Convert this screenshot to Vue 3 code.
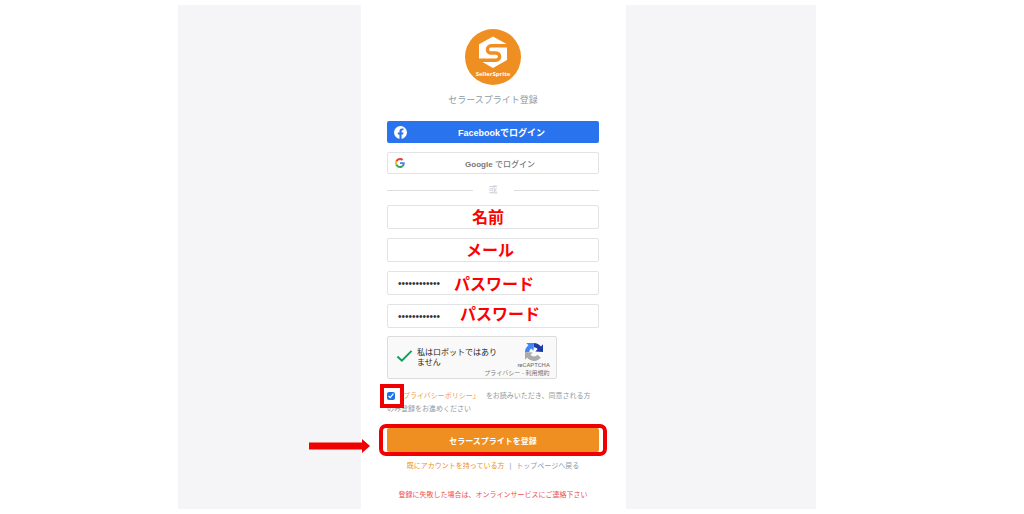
<script setup>
import { ref } from 'vue'

const fields = ref([
  { id: 'name', label: '名前', type: 'text', value: '', place: 'note-name' },
  { id: 'mail', label: 'メール', type: 'email', value: '', place: 'note-mail' },
  { id: 'password', label: 'パスワード', type: 'password', value: 'password1234', place: 'note-password' },
  { id: 'confirm', label: 'パスワード', type: 'password', value: 'password1234', place: 'note-confirm' }
])
const agreed = ref(true)
</script>

<template>
  <div class="page">
    <main class="panel">
      <form class="card" @submit.prevent>
        <svg class="logo" viewBox="0 0 56 56" role="img" aria-label="SellerSprite">
          <circle cx="28" cy="28" r="28" fill="#f08f21" />
          <path d="M28 7.500L42 15.300V31L28 39L14 31V15.300Z" fill="#fff" />
          <path d="M43 16.800H26a3.600 3.600 0 0 0 0 7.200H31a3.600 3.600 0 0 1 0 7.200H13" fill="none" stroke="#f08f21" stroke-width="3.400" />
          <text x="28" y="47" text-anchor="middle" class="logo-name">SellerSprite</text>
        </svg>
        <h1 class="title">セラースプライト登録</h1>

        <button type="button" class="social facebook">
          <svg class="facebook-icon" viewBox="0 0 24 24" aria-hidden="true">
            <circle cx="12" cy="12" r="12" fill="#fff" />
            <path d="M10.100 24v-8.500H7V12h3.100V9.300c0-3.100 1.850-4.800 4.650-4.800 1.350 0 2.750.25 2.750.25v3h-1.550c-1.500 0-2 .95-2 1.900V12h3.400l-.55 3.500h-2.850V24z" fill="#2974ee" />
          </svg>
          <span>Facebookでログイン</span>
        </button>
        <button type="button" class="social google">
          <svg class="google-icon" viewBox="0 0 48 48" aria-hidden="true">
            <path fill="#EA4335" d="M24 9.500c3.540 0 6.710 1.220 9.210 3.600l6.850-6.850C35.900 2.380 30.470 0 24 0 14.620 0 6.510 5.380 2.560 13.220l7.980 6.190C12.430 13.720 17.740 9.500 24 9.500z" />
            <path fill="#4285F4" d="M46.980 24.550c0-1.570-.15-3.090-.38-4.550H24v9.020h12.940c-.58 2.960-2.260 5.480-4.780 7.180l7.730 6c4.510-4.180 7.090-10.360 7.090-17.650z" />
            <path fill="#FBBC05" d="M10.530 28.590A14.500 14.500 0 0 1 9.770 24c0-1.600.27-3.140.76-4.590l-7.980-6.190A23.900 23.900 0 0 0 0 24c0 3.880.92 7.540 2.560 10.780z" />
            <path fill="#34A853" d="M24 48c6.480 0 11.930-2.130 15.890-5.810l-7.730-6c-2.150 1.450-4.920 2.300-8.160 2.300-6.260 0-11.570-4.220-13.470-9.910l-7.980 6.190C6.510 42.620 14.620 48 24 48z" />
          </svg>
          <span><b>Google</b> でログイン</span>
        </button>

        <div class="divider"><span>或</span></div>

        <div class="fields">
          <div v-for="field in fields" :key="field.id" class="field">
            <input :id="field.id" v-model="field.value" :type="field.type" autocomplete="off" />
            <label :for="field.id" class="note" :class="field.place">{{ field.label }}</label>
          </div>
        </div>

        <div class="captcha">
          <svg class="tick" viewBox="0 0 18 14" aria-hidden="true">
            <path d="M1.500 7.500L6.200 12L16.500 1.500" fill="none" stroke="#0f9d58" stroke-width="2" />
          </svg>
          <p class="captcha-text">私はロボットではありません</p>
          <div class="brand">
            <svg class="brand-icon" viewBox="0 0 64 64" aria-hidden="true">
              <path fill="#1c3aa9" d="M64 31.950V4.600l-7.600 7.600A32 32 0 0 0 31.900 0v15.400c5 0 9.800 2.500 12.700 6.700l-7.800 7.800z" />
              <path fill="#4285f4" d="M31.900 0H4.600l7.600 7.600A32 32 0 0 0 0 32h15.400c0-5 2.500-9.800 6.700-12.700l8.200 8.200z" />
              <path fill="#ababab" d="M0 32v27.300l7.500-7.500A32 32 0 0 0 56.500 52.500L44.600 41.800A15.800 15.800 0 0 1 19.300 41.900l8.400-8.400z" />
            </svg>
            <span class="brand-name">reCAPTCHA</span>
          </div>
          <p class="terms"><a href="#">プライバシー</a> - <a href="#">利用規約</a></p>
        </div>

        <div class="policy">
          <span class="check"><input id="agree" v-model="agreed" type="checkbox" /></span>
          <label for="agree"><a href="#" class="policy-link">「プライバシーポリシー」</a>をお読みいただき、同意される方のみ登録をお進めください</label>
        </div>

        <div class="submit">
          <button type="submit" class="register">セラースプライトを登録</button>
          <svg class="arrow" viewBox="0 0 61 14" aria-hidden="true">
            <path d="M0 3.500H53V0L61 7L53 14V10.500H0Z" fill="#f00000" />
          </svg>
        </div>

        <p class="links"><a href="#" class="orange">既にアカウントを持っている方</a><span class="bar">|</span><a href="#">トップページへ戻る</a></p>
        <p class="help">登録に失敗した場合は、オンラインサービスにご連絡下さい</p>
      </form>
    </main>
  </div>
</template>

<style>
body {
  margin: 0;
  background: #fff;
}
</style>

<style scoped>
.page {
  display: grid;
  grid-template-columns: 178fr 638fr 208fr;
  padding: 5px 0;
  font-family: "Liberation Sans", "Noto Sans CJK JP", sans-serif;
  color: #8f9ba5;
}
.page *,
.page *::before,
.page *::after {
  box-sizing: border-box;
}
.panel {
  grid-column: 2;
  display: grid;
  grid-template-columns: 183fr 265px 190fr;
  background: #f5f5f7;
}
.card {
  grid-column: 2;
  display: flex;
  flex-direction: column;
  padding: 24px 27px 8px 26px;
  background: #fff;
}
button,
input {
  font-family: inherit;
  margin: 0;
}
p {
  margin: 0;
}
a {
  color: inherit;
  text-decoration: none;
}
.logo {
  align-self: center;
  width: 56px;
  height: 56px;
}
.logo-name {
  font: bold 6px "Open Sans", sans-serif;
  fill: #fff;
}
.title {
  margin: 8px 0 14px;
  font-size: 9px;
  font-weight: 400;
  line-height: 14px;
  text-align: center;
}
.social {
  display: flex;
  align-items: center;
  gap: 3px;
  height: 22px;
  padding: 0 6px 0 7px;
  border-radius: 2px;
}
.social span {
  flex: 1;
}
.facebook {
  border: 0;
  background: #2974ee;
  color: #fff;
  font-size: 9px;
  font-weight: 700;
}
.facebook-icon {
  width: 13px;
  height: 13px;
}
.google {
  margin-top: 9px;
  border: 1px solid #e2e3e5;
  background: #fff;
  color: #777;
  font-size: 8px;
  font-weight: 500;
}
.google-icon {
  width: 10px;
  height: 10px;
}
.divider {
  display: flex;
  align-items: center;
  gap: 16px;
  margin: 9px 0 8px;
  font-size: 9px;
  line-height: 14px;
  color: #ccc;
}
.divider::before,
.divider::after {
  content: "";
  flex: 1;
  height: 1px;
  background: #dcdddf;
}
.fields {
  display: grid;
  gap: 9px;
}
.field {
  position: relative;
  display: flex;
}
.field input {
  width: 100%;
  height: 24px;
  padding: 0 10px;
  border: 1px solid #e2e3e5;
  border-radius: 2px;
  background: #fff;
  color: #333;
  font-size: 10px;
}
.note {
  position: absolute;
  top: 1px;
  font-size: 16px;
  font-weight: 700;
  line-height: 24px;
  color: #f00;
}
.note-name {
  left: 85px;
}
.note-mail {
  left: 79px;
}
.note-password {
  top: 2px;
  left: 67px;
}
.note-confirm {
  top: -1px;
  left: 73px;
}
.captcha {
  display: grid;
  grid-template-columns: 17px 1fr 32px;
  grid-template-rows: 32px 8px;
  column-gap: 4px;
  align-items: center;
  width: 80%;
  height: 43px;
  margin-top: 8px;
  padding: 0 6px 0 8px;
  border: 1px solid #dcdcdc;
  border-radius: 2px;
  background: #f9f9f9;
}
.tick {
  width: 17px;
  height: 14px;
  margin-top: 6px;
}
.captcha-text {
  width: 80px;
  padding-top: 10px;
  font-size: 8px;
  line-height: 10px;
  color: #222;
}
.brand {
  display: flex;
  flex-direction: column;
  align-items: center;
  padding-top: 6px;
}
.brand-icon {
  width: 18px;
  height: 18px;
}
.brand-name {
  font: 6px/8px Roboto, sans-serif;
  color: #666;
}
.terms {
  grid-column: 1 / -1;
  font-size: 6px;
  line-height: 8px;
  text-align: right;
  color: #777;
}
.policy {
  position: relative;
  margin-top: 10px;
  padding-right: 4px;
  font-size: 7px;
  line-height: 13px;
}
.check {
  display: inline-flex;
  width: 9px;
  vertical-align: middle;
}
.check input {
  width: 8px;
  height: 8px;
  accent-color: #1a73e8;
}
.check::after {
  content: "";
  position: absolute;
  top: -5px;
  left: -7px;
  width: 24px;
  height: 24px;
  border: 4px solid #f00000;
  pointer-events: none;
}
.policy-link {
  margin-right: 6px;
  color: #f3994a;
}
.submit {
  position: relative;
  margin-top: 13px;
}
.submit::after {
  content: "";
  position: absolute;
  inset: -4px -8px;
  border: 4px solid #f00000;
  border-radius: 7px;
  pointer-events: none;
}
.register {
  display: block;
  width: 100%;
  height: 24px;
  border: 0;
  border-radius: 2px;
  background: #f08f21;
  color: #fff;
  font-size: 8px;
  font-weight: 700;
}
.arrow {
  position: absolute;
  top: 11px;
  right: calc(100% + 17px);
  width: 61px;
  height: 14px;
}
.links,
.help {
  font-size: 7px;
  line-height: 12px;
  text-align: center;
  white-space: nowrap;
}
.links {
  margin-top: 8px;
}
.orange {
  color: #f08f21;
}
.bar {
  margin: 0 5px;
}
.help {
  margin-top: 17px;
  color: #f05050;
}
</style>
